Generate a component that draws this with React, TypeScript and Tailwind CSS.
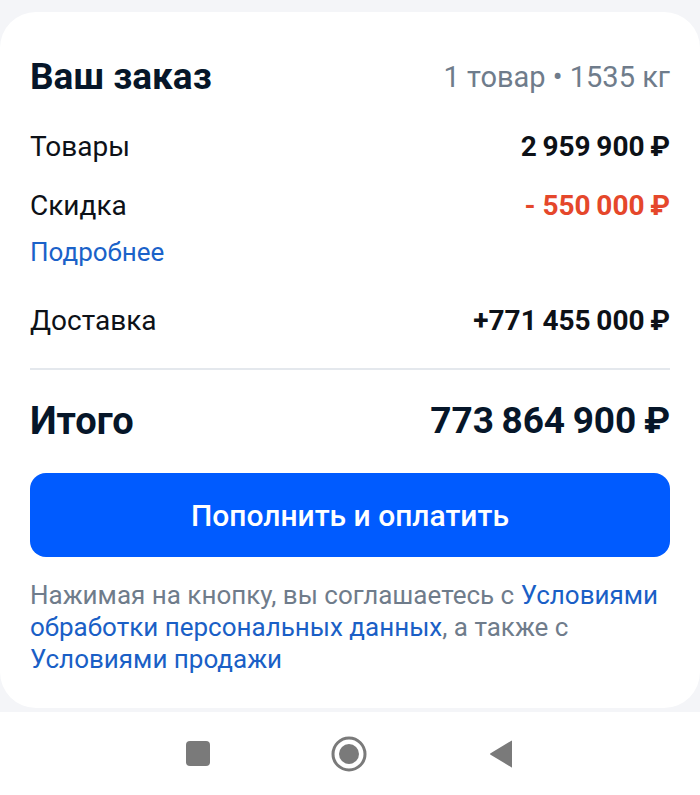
import React from "react";

const font = { fontFamily: "Roboto, 'Noto Sans', sans-serif" };

interface Row {
  label: string;
  value: string;
  valueClass: string;
}

function SummaryRow({ label, value, valueClass }: Row) {
  return (
    <div className="flex items-center justify-between h-[36px]">
      <span className="text-[28px] leading-[36px] text-[#0d1117]">{label}</span>
      <span className={`text-[28px] leading-[36px] font-bold ${valueClass}`}>{value}</span>
    </div>
  );
}

export default function App() {
  return (
    <div className="w-[700px] h-[795px] bg-[#f4f5f8] flex flex-col overflow-hidden" style={font}>
      {/* Order card */}
      <div className="mt-3 bg-white rounded-[36px] px-[30px] pt-[45px] h-[696px]">
        <div className="flex items-center justify-between h-[40px]">
          <h1 className="text-[37px] leading-[40px] font-bold text-[#061629]">Ваш заказ</h1>
          <span className="text-[29px] leading-[36px] text-[#6f7c8b]">1 товар • 1535 кг</span>
        </div>

        <div className="mt-[32px] flex flex-col gap-[23px]">
          <SummaryRow label="Товары" value={"2\u2009959\u2009900\u2009₽"} valueClass="text-[#0d1117]" />
          <SummaryRow label="Скидка" value={"-\u00a0550\u2009000\u2009₽"} valueClass="text-[#e5472b]" />
        </div>
        <div className="mt-[12px] text-[26px] leading-[32px] text-[#1a62c9]">Подробнее</div>

        <div className="mt-[35px]">
          <SummaryRow label="Доставка" value={"+771\u2009455\u2009000\u2009₽"} valueClass="text-[#0d1117]" />
        </div>

        <div className="mt-[29px] h-[2px] bg-[#e4e8ed]" />

        <div className="mt-[29px] flex items-center justify-between h-[44px]">
          <span className="text-[38px] leading-[44px] font-bold text-[#061629]">Итого</span>
          <span className="text-[37px] leading-[44px] font-bold text-[#061629]">{"773\u2009864\u2009900\u2009₽"}</span>
        </div>

        <button className="mt-[30px] w-full h-[84px] rounded-[16px] bg-[#005bff] text-white text-[30px] font-medium">
          Пополнить и оплатить
        </button>

        <p className="mt-[22px] text-[26px] leading-[32px] text-[#6f7c8b]">
          Нажимая на кнопку, вы соглашаетесь с <span className="text-[#1a5fc6]">Условиями</span>{" "}
          <span className="text-[#1a5fc6]">обработки персональных данных</span>, а также с{" "}
          <span className="text-[#1a5fc6]">Условиями продажи</span>
        </p>
      </div>

      {/* Android nav bar */}
      <div className="mt-[4px] flex-1 bg-white flex items-center justify-center gap-[120px]">
        <div className="w-[24px] h-[25px] rounded-[4px] bg-[#7a7a7a]" />
        <svg width="38" height="38" viewBox="0 0 38 38">
          <circle cx="19" cy="19" r="16" fill="none" stroke="#7a7a7a" strokeWidth="3" />
          <circle cx="19" cy="19" r="10" fill="#7a7a7a" />
        </svg>
        <svg width="26" height="30" viewBox="0 0 26 30">
          <path d="M24 2 L24 28 Q24 29 23 28 L3 16 Q1 15 3 14 L23 2 Q24 1 24 2 Z" fill="#7a7a7a" />
        </svg>
      </div>
    </div>
  );
}
